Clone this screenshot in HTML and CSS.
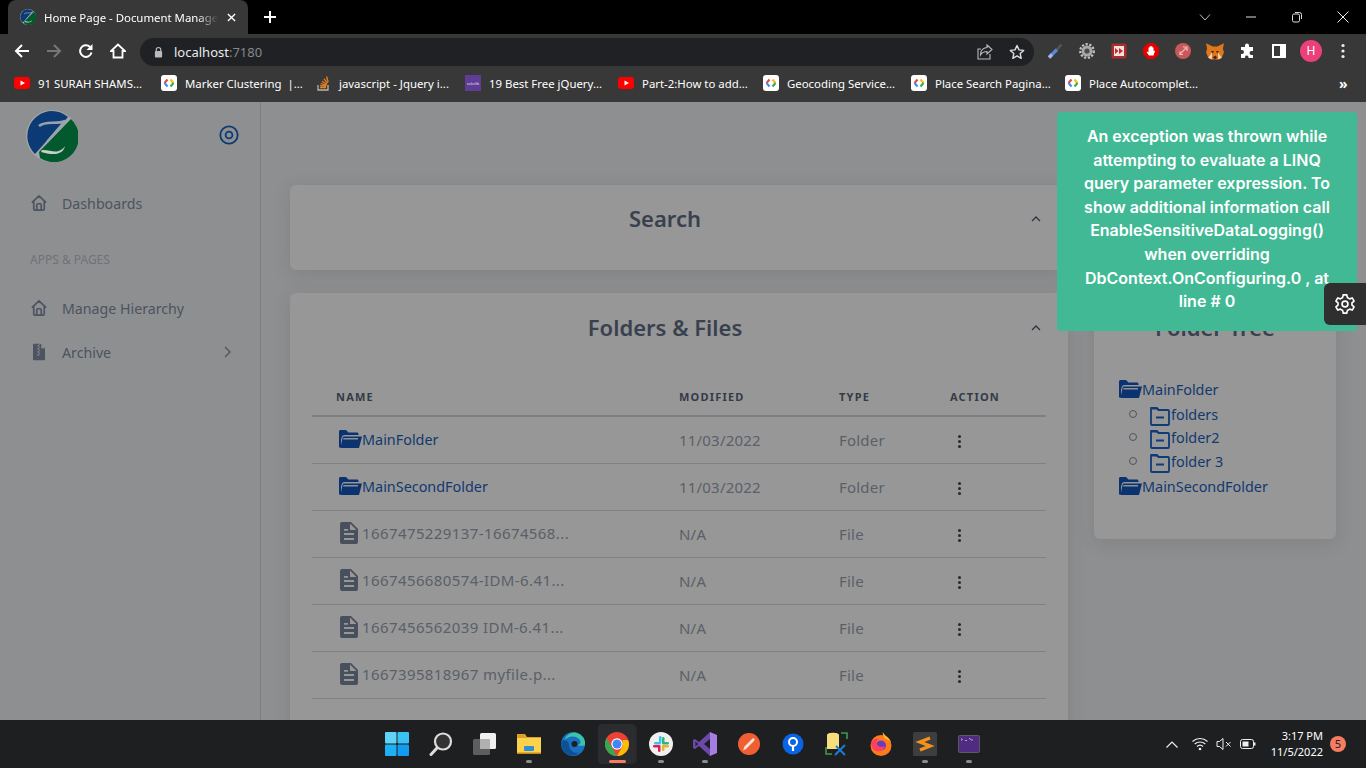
FILE: index.html
```html
<!DOCTYPE html>
<html lang="en">
<head>
    <meta charset="UTF-8">
    <meta name="viewport" content="width=device-width, initial-scale=1.0">
    <title>Home Page - Document Management</title>
    <link rel="stylesheet" href="styles.css">
</head>
<body>
    <svg class="sprites" width="0" height="0">
        <symbol id="logo" viewBox="0 0 52 52">
            <circle cx="26" cy="26" r="26" fill="#a3a5a6"/>
            <path d="M26 1A25 25 0 0 0 9 44L42 7A25 25 0 0 0 26 1Z" fill="#0b3a75"/>
            <path d="M45 9A25 25 0 0 1 14 48L13 42L45 9Z" fill="#03592e"/>
            <path d="M13 16C20 10 30 15 39 11L21 32" fill="none" stroke="#97a3ad" stroke-width="2.5"/>
            <path d="M16 40C24 39 32 46 39 36C37 46 25 45 15 42Z" fill="#c4cfc8"/>
        </symbol>
        <symbol id="home" viewBox="0 0 24 24">
            <path d="M2.500 11.500 12 2.500l9.500 9M5 9.500V20a1.500 1.500 0 0 0 1.500 1.500h11A1.500 1.500 0 0 0 19 20V9.500M9 21v-6.500a1.500 1.500 0 0 1 1.500-1.500h3a1.500 1.500 0 0 1 1.500 1.500V21" fill="none" stroke="currentColor" stroke-width="2.200" stroke-linejoin="round"/>
        </symbol>
        <symbol id="zipfile" viewBox="0 0 24 24">
            <path fill="currentColor" d="M5 1h9l6 6v15a1 1 0 0 1-1 1H5a1 1 0 0 1-1-1V2a1 1 0 0 1 1-1z"/>
            <path fill="#8f9092" d="M10 3h2v2h-2zm0 4h2v2h-2zm0 4h2v2h-2zm0 4h2v2h-2zm5-13v5h5zM12 1h1v2h-1zM12 5h1v2h-1zM12 9h1v2h-1zM12 13h1v2h-1z"/>
        </symbol>
        <symbol id="folder-open" viewBox="0 0 24 20">
            <path fill="currentColor" d="M1 2.500C1 1.700 1.700 1 2.500 1h5.500l2.500 2.500h8.500c.8 0 1.500.7 1.500 1.500v1H6.500C5 6 4.200 6.800 3.800 8L3 10.500V18.500H1z"/>
            <path fill="currentColor" d="M6.200 7.500H24l-3 11.500H2.500l2-10c.2-.9.800-1.500 1.700-1.500z"/>
            <path fill="#8f9092" d="M5.500 9h14.500v1.500H5.200z"/>
        </symbol>
        <symbol id="folder-minus" viewBox="0 0 20 20">
            <path fill="none" stroke="currentColor" stroke-width="1.800" stroke-linejoin="round" d="M1 2h5.500l2 2H18a1 1 0 0 1 1 1v13a1 1 0 0 1-1 1H2a1 1 0 0 1-1-1z"/>
            <path fill="currentColor" d="M1 1h6l2.500 2.500H1zM6 10.500h8v2H6z"/>
        </symbol>
        <symbol id="doc" viewBox="0 0 18 22">
            <path fill="currentColor" d="M2 0h9l7 7v13a2 2 0 0 1-2 2H2a2 2 0 0 1-2-2V2a2 2 0 0 1 2-2z"/>
            <path fill="#979798" d="M10 1.500V8h6.500zM4 11h10v2H4zM4 16h10v2H4zM4 7h4v1.800H4z"/>
        </symbol>
        <symbol id="gbadge" viewBox="0 0 16 16">
            <rect width="16" height="16" rx="3" fill="#fff"/>
            <path d="M6.500 4.500 3.500 8" fill="none" stroke="#ea4335" stroke-width="2"/>
            <path d="M3.500 8l3 3.500" fill="none" stroke="#4285f4" stroke-width="2"/>
            <path d="M9.500 4.500l3 3.500" fill="none" stroke="#fbbc04" stroke-width="2"/>
            <path d="M12.500 8l-3 3.500" fill="none" stroke="#34a853" stroke-width="2"/>
        </symbol>
        <symbol id="yt" viewBox="0 0 16 12">
            <rect width="16" height="12" rx="3" fill="#f00"/>
            <path d="M6.500 3.500v5L11 6z" fill="#fff"/>
        </symbol>
    </svg>

    <div class="browser">
        <div class="tabbar">
            <div class="tab">
                <svg class="favicon"><use href="#logo"/></svg>
                <span class="tab-title">Home Page - Document Management</span>
                <svg class="tab-close" viewBox="0 0 10 10"><path d="M1 1l8 8M9 1 1 9" stroke="#fff" stroke-width="1.500"/></svg>
            </div>
            <svg class="new-tab" viewBox="0 0 12 12"><path d="M6 0v12M0 6h12" stroke="#fff" stroke-width="2"/></svg>
            <div class="win-controls">
                <svg class="win-btn" viewBox="0 0 12 12"><path d="M1 3.500 6 9l5-5.500" fill="none" stroke="#bbb"/></svg>
                <svg class="win-btn" viewBox="0 0 12 12"><path d="M1 6h10" stroke="#ddd"/></svg>
                <svg class="win-btn" viewBox="0 0 12 12"><rect x="1.500" y="3" width="7" height="8" rx="1.500" fill="none" stroke="#ddd"/><path d="M4 1.500h4.500a2 2 0 0 1 2 2V8" fill="none" stroke="#ddd"/></svg>
                <svg class="win-btn" viewBox="0 0 12 12"><path d="M.5.500l11 11M11.500.500l-11 11" stroke="#eee"/></svg>
            </div>
        </div>

        <div class="toolbar">
            <svg class="nav-icon" viewBox="0 0 16 16"><path d="M15 8H2M8 2 2 8l6 6" fill="none" stroke="#fff" stroke-width="2"/></svg>
            <svg class="nav-icon" viewBox="0 0 16 16"><path d="M1 8h13M8 2l6 6-6 6" fill="none" stroke="#777" stroke-width="2"/></svg>
            <svg class="nav-icon" viewBox="0 0 16 16"><path d="M13.500 9.500A5.800 5.800 0 1 1 12 4" fill="none" stroke="#fff" stroke-width="2"/><path d="M14.500 1v6h-6z" fill="#fff"/></svg>
            <svg class="nav-icon" viewBox="0 0 16 16"><path d="M8 1.500 1 8h2.500v6.500h9V8H15z" fill="none" stroke="#fff" stroke-width="1.800"/></svg>
            <div class="omnibox">
                <svg class="lock" viewBox="0 0 10 12"><path d="M2.500 5V3.500a2.500 2.500 0 0 1 5 0V5" fill="none" stroke="#bbb" stroke-width="1.300"/><rect x="1" y="5" width="8" height="7" rx="1" fill="#bbb"/></svg>
                <span class="url">localhost<span class="url-port">:7180</span></span>
                <svg class="omni-icon" viewBox="0 0 16 16"><path d="M10 1l5 4.500L10 10V7.500C7 7.500 5 8.500 3.500 11 3.500 7 6 4 10 3.500zM13 10v5H1V5h3" fill="none" stroke="#bbb" stroke-width="1.100"/></svg>
                <svg class="omni-icon" viewBox="0 0 16 16"><path d="m8 1.500 2 4.400 4.700.5-3.500 3.200 1 4.700L8 11.900l-4.200 2.400 1-4.700L1.300 6.400 6 5.900z" fill="none" stroke="#ddd" stroke-width="1.400" stroke-linejoin="round"/></svg>
            </div>
            <div class="extensions">
                <svg class="ext" viewBox="0 0 16 16"><path d="M2 14.500 10 6.500" stroke="#5d86d6" stroke-width="3.200"/><path d="M2 14.500 5 11.500" stroke="#9db8ea" stroke-width="3.200"/><path d="M10 6.500 14.500 1.500" stroke="#555" stroke-width="2.600"/></svg>
                <svg class="ext" viewBox="0 0 16 16"><circle cx="8" cy="8" r="5.500" fill="#a9a9a9"/><circle cx="8" cy="8" r="6.800" fill="none" stroke="#c4c4c4" stroke-width="2.200" stroke-dasharray="2.200 1.600"/><circle cx="8" cy="8" r="2.600" fill="#4a4a4a"/></svg>
                <svg class="ext" viewBox="0 0 16 16"><rect x=".5" y=".5" width="15" height="15" rx="2" fill="#a92f2f"/><rect x="3" y="3" width="10" height="10" fill="#f1e2e2"/><path d="M4 5v6l3.500-3zM8 5v6l4-3z" fill="#c62828"/></svg>
                <svg class="ext" viewBox="0 0 16 16"><path d="M5 0h6l5 5v6l-5 5H5l-5-5V5z" fill="#e60000"/><path d="M6 12.500 3.500 9l.6-.6L5.500 9.500V4.500h1v-1h1V3h1v.5h1v1h1v3.500l1-.5.500.5-1.500 4.500z" fill="#fff"/></svg>
                <svg class="ext" viewBox="0 0 16 16"><circle cx="8" cy="8" r="8" fill="#c9585a"/><path d="M4.500 11.500 11 5M8 4h4v4M5 8.500v3h3" fill="none" stroke="#eebcbc" stroke-width="1.200"/></svg>
                <svg class="ext ext-fox" viewBox="0 0 16 16"><path d="M0 1l6 3h4l6-3-1 5 1 3-2 5-3 1.500H5L2 14 0 9l1-3z" fill="#e2761b"/><path d="M4.500 8h2.500l-1 2.500zm7 0H9l1 2.500zM6 13.500l2-1.500 2 1.500-2 2z" fill="#3a2a20"/><path d="M2 14 5.500 9 5 15.500zM14 14l-3.500-5 .5 6.500z" fill="#f6d6b0"/></svg>
                <svg class="ext" viewBox="0 0 16 16"><path fill="#fff" d="M6 2.500a2 2 0 0 1 4 0V4h4v4h-1.500a2 2 0 0 0 0 4H14v3H9.500v-1a1.800 1.800 0 0 0-3.500 0v1H2v-4h1a2 2 0 0 0 0-4H2V4h4z"/></svg>
                <svg class="ext" viewBox="0 0 16 16"><rect x="2" y="2" width="12" height="12" fill="none" stroke="#fff" stroke-width="2"/><rect x="9" y="2" width="5" height="12" fill="#fff"/></svg>
                <span class="avatar">H</span>
                <svg class="ext" viewBox="0 0 16 16"><circle cx="8" cy="2.500" r="1.600" fill="#eee"/><circle cx="8" cy="8" r="1.600" fill="#eee"/><circle cx="8" cy="13.500" r="1.600" fill="#eee"/></svg>
            </div>
        </div>

        <div class="bookmarks">
            <span class="bm"><svg class="bm-icon"><use href="#yt"/></svg>91 SURAH SHAMS...</span>
            <span class="bm"><svg class="bm-icon"><use href="#gbadge"/></svg>Marker Clustering &nbsp;|...</span>
            <span class="bm"><svg class="bm-icon" viewBox="0 0 16 16"><path d="M3 10v5h10v-5" fill="none" stroke="#b9b4ac" stroke-width="1.300"/><path d="M5 12.500h6M5.200 10.500l6 .6M5.800 8.500l5.800 1.700M7 6.300l5 3M9 3.800l3.500 4.400M11.500 1.500l1.700 5.500" stroke="#e98024" stroke-width="1.300"/></svg>javascript - Jquery i...</span>
            <span class="bm"><svg class="bm-icon" viewBox="0 0 16 16"><rect width="16" height="16" fill="#5f3d97"/><text x="8" y="9.500" class="colorlib">colorlib</text></svg>19 Best Free jQuery...</span>
            <span class="bm"><svg class="bm-icon"><use href="#yt"/></svg>Part-2:How to add...</span>
            <span class="bm"><svg class="bm-icon"><use href="#gbadge"/></svg>Geocoding Service...</span>
            <span class="bm"><svg class="bm-icon"><use href="#gbadge"/></svg>Place Search Pagina...</span>
            <span class="bm"><svg class="bm-icon"><use href="#gbadge"/></svg>Place Autocomplet...</span>
            <span class="bm-more">»</span>
        </div>
    </div>

    <div class="page">
        <aside class="sidebar">
            <div class="brand">
                <svg class="brand-logo"><use href="#logo"/></svg>
                <svg class="brand-toggle" viewBox="0 0 20 20"><circle cx="10" cy="10" r="8.700" fill="none" stroke="#0b3a75" stroke-width="1.800"/><circle cx="10" cy="10" r="3.400" fill="none" stroke="#0b3a75" stroke-width="1.800"/></svg>
            </div>
            <a class="nav-item nav-first"><svg class="nav-svg"><use href="#home"/></svg>Dashboards</a>
            <div class="nav-header">APPS &amp; PAGES</div>
            <a class="nav-item"><svg class="nav-svg"><use href="#home"/></svg>Manage Hierarchy</a>
            <a class="nav-item"><svg class="nav-svg"><use href="#zipfile"/></svg>Archive<svg class="nav-arrow" viewBox="0 0 8 12"><path d="M1 1l5 5-5 5" fill="none" stroke="currentColor" stroke-width="1.300"/></svg></a>
        </aside>

        <main class="content">
            <section class="card card-search">
                <h2>Search</h2>
                <svg class="collapse" viewBox="0 0 10 6"><path d="M1 5l4-4 4 4" fill="none" stroke="currentColor" stroke-width="1.300"/></svg>
            </section>

            <section class="card card-files">
                <h2>Folders &amp; Files</h2>
                <svg class="collapse" viewBox="0 0 10 6"><path d="M1 5l4-4 4 4" fill="none" stroke="currentColor" stroke-width="1.300"/></svg>
                <table class="files">
                    <thead>
                        <tr><th>Name</th><th>Modified</th><th>Type</th><th>Action</th></tr>
                    </thead>
                    <tbody>
                        <tr>
                            <td class="name folder"><svg class="ico-folder"><use href="#folder-open"/></svg>MainFolder</td>
                            <td>11/03/2022</td><td>Folder</td><td><span class="dots"></span></td>
                        </tr>
                        <tr>
                            <td class="name folder"><svg class="ico-folder"><use href="#folder-open"/></svg>MainSecondFolder</td>
                            <td>11/03/2022</td><td>Folder</td><td><span class="dots"></span></td>
                        </tr>
                        <tr>
                            <td class="name file"><svg class="ico-doc"><use href="#doc"/></svg>1667475229137-16674568...</td>
                            <td>N/A</td><td>File</td><td><span class="dots"></span></td>
                        </tr>
                        <tr>
                            <td class="name file"><svg class="ico-doc"><use href="#doc"/></svg>1667456680574-IDM-6.41...</td>
                            <td>N/A</td><td>File</td><td><span class="dots"></span></td>
                        </tr>
                        <tr>
                            <td class="name file"><svg class="ico-doc"><use href="#doc"/></svg>1667456562039 IDM-6.41...</td>
                            <td>N/A</td><td>File</td><td><span class="dots"></span></td>
                        </tr>
                        <tr>
                            <td class="name file"><svg class="ico-doc"><use href="#doc"/></svg>1667395818967 myfile.p...</td>
                            <td>N/A</td><td>File</td><td><span class="dots"></span></td>
                        </tr>
                    </tbody>
                </table>
            </section>

            <section class="card card-tree">
                <h2>Folder Tree</h2>
                <ul class="tree">
                    <li class="tree-root"><svg class="ico-folder"><use href="#folder-open"/></svg>MainFolder
                        <ul class="tree-sub">
                            <li><svg class="ico-minus"><use href="#folder-minus"/></svg>folders</li>
                            <li><svg class="ico-minus"><use href="#folder-minus"/></svg>folder2</li>
                            <li><svg class="ico-minus"><use href="#folder-minus"/></svg>folder 3</li>
                        </ul>
                    </li>
                    <li class="tree-root"><svg class="ico-folder"><use href="#folder-open"/></svg>MainSecondFolder</li>
                </ul>
            </section>
        </main>

        <div class="toast">An exception was thrown while attempting to evaluate a LINQ query parameter expression. To show additional information call EnableSensitiveDataLogging() when overriding DbContext.OnConfiguring.0 , at line # 0</div>
        <button class="customizer"><svg viewBox="0 0 24 24"><path d="M10 2h4l.6 3 2.400 1.400 2.900-1 2 3.400-2.300 2v2.400l2.300 2-2 3.400-2.900-1L14.600 19 14 22h-4l-.6-3L7 17.600l-2.900 1-2-3.400 2.300-2v-2.400l-2.300-2 2-3.400 2.900 1L9.400 5z" fill="none" stroke="#fff" stroke-width="1.800" stroke-linejoin="round"/><circle cx="12" cy="12" r="3.200" fill="none" stroke="#fff" stroke-width="1.800"/></svg></button>
    </div>

    <footer class="taskbar">
        <div class="task-icons">
            <span class="task"><svg viewBox="0 0 24 24"><rect x="0" y="0" width="11.500" height="11.500" rx="1" fill="#5fd4f7"/><rect x="12.500" y="0" width="11.500" height="11.500" rx="1" fill="#3ac2f5"/><rect x="0" y="12.500" width="11.500" height="11.500" rx="1" fill="#1eb0f5"/><rect x="12.500" y="12.500" width="11.500" height="11.500" rx="1" fill="#129bf0"/></svg></span>
            <span class="task"><svg viewBox="0 0 24 24"><circle cx="14" cy="9.500" r="8" fill="#333" stroke="#ddd" stroke-width="2.200"/><path d="M8 16 2 22.500" stroke="#ddd" stroke-width="3" stroke-linecap="round"/></svg></span>
            <span class="task"><svg viewBox="0 0 24 24"><rect x="7" y="1" width="16" height="16" rx="1.500" fill="#f0f0f0"/><rect x="0" y="7" width="17" height="16" rx="1.500" fill="#5e5e5e"/><rect x="7" y="7" width="10" height="10" fill="#b0b0b0"/></svg></span>
            <span class="task running"><svg viewBox="0 0 24 24"><path d="M0 2h8l2 3H24v17H0z" fill="#d9a227"/><rect y="6" width="24" height="16" fill="#fcd24d"/><rect x="7" y="14" width="10" height="5" rx="1" fill="#2d8fd5"/><rect y="20.500" width="24" height="1.500" fill="#c68a12"/></svg></span>
            <span class="task"><svg viewBox="0 0 24 24"><circle cx="12" cy="12" r="12" fill="#1a6fc0"/><path d="M23.800 13.500A10 10 0 0 0 3 9C6 4 14 3 18 7c3 3 1 6-2 6 3 1 6 1 7.800.5z" fill="#37c6a8"/><path d="M8 13c0 5 5 9 10 7.500-2 2-5 3.500-8 3A12 12 0 0 1 .500 9.500C3 7 8 8 8 13z" fill="#0f4f95"/><circle cx="13.500" cy="12" r="3" fill="#1e1f21"/></svg></span>
            <span class="task task-active"><svg viewBox="0 0 24 24"><circle cx="12" cy="12" r="12" fill="#ea4335"/><path d="M12 24A12 12 0 0 1 1.600 6L7 15.500l5 8.500z" fill="#34a853"/><path d="M24 12a12 12 0 0 1-12 12l6-10.500-.500-5.500h5.500c.6 1.200 1 2.500 1 4z" fill="#fbbc04"/><circle cx="12" cy="12" r="5.700" fill="#fff"/><circle cx="12" cy="12" r="4.500" fill="#4285f4"/></svg></span>
            <span class="task running"><svg viewBox="0 0 24 24"><circle cx="12" cy="12" r="12" fill="#f1f0ee"/><rect x="10" y="4" width="2.500" height="7" rx="1.200" fill="#36c5f0"/><rect x="5" y="10" width="7" height="2.500" rx="1.200" fill="#36c5f0"/><rect x="13" y="5" width="2.500" height="7" rx="1.200" fill="#2eb67d"/><rect x="13" y="10" width="7" height="2.500" rx="1.200" fill="#2eb67d"/><rect x="4" y="13" width="7" height="2.500" rx="1.200" fill="#e01e5a"/><rect x="9" y="13" width="2.500" height="7" rx="1.200" fill="#e01e5a"/><rect x="13" y="13" width="2.500" height="6" rx="1.200" fill="#ecb22e"/><rect x="13" y="13" width="7" height="2.500" rx="1.200" fill="#ecb22e"/></svg></span>
            <span class="task running"><svg viewBox="0 0 24 24"><path d="M17 0 24 3v18l-7 3z" fill="#a67ee2"/><path d="M17 0 6 10 2 7 0 8v8l2 1 4-3 11 10V17l-6-5 6-5z" fill="#6c49a8"/><path d="M2.500 9.500 5 12l-2.500 2.500z" fill="#1e1f21"/></svg></span>
            <span class="task"><svg viewBox="0 0 24 24"><circle cx="12" cy="12" r="11" fill="#f05f33"/><path d="M6 18.500l1.500-4L15 7c1-1 2.500-1 2.500 0s0 1.500-1 2.500L9 17z" fill="#fbe3da"/></svg></span>
            <span class="task"><svg viewBox="0 0 24 24"><circle cx="12" cy="12" r="10.500" fill="#0b63e5"/><circle cx="12" cy="10" r="4" fill="none" stroke="#fff" stroke-width="2"/><path d="M12 13v6" stroke="#fff" stroke-width="2.200"/></svg></span>
            <span class="task"><svg viewBox="0 0 24 24"><path d="M2 3c0-3 12-3 12 0v14H2z" fill="#f6df7c"/><path d="M16 1h6v6M1 15v7h6" fill="none" stroke="#3c9c4a" stroke-width="1.600"/><path d="M10 23l10-10M11 14l9 9" stroke="#1e7bd6" stroke-width="2"/></svg></span>
            <span class="task"><svg viewBox="0 0 24 24"><circle cx="12" cy="13.500" r="10.500" fill="#ff7a1a"/><path d="M14 0c1 4 7 5 8 11-2-3-4-4-6-4-1-3-3-4-2-7z" fill="#ffb52e"/><circle cx="12" cy="13.500" r="5" fill="#6b3bbf"/><path d="M2 11c2-4 5-5 8-4-2 1-3 3-2 5 1 3 5 4 8 2-1 4-5 6-9 5-3-1-5-4-5-8z" fill="#ff3f5e"/></svg></span>
            <span class="task running"><svg viewBox="0 0 24 24"><rect width="24" height="24" rx="1.500" fill="#3e3e3e"/><path d="M17 6 7 10l10 4-10 4" fill="none" stroke="#f5921e" stroke-width="3.400"/></svg></span>
            <span class="task running"><svg viewBox="0 0 24 24"><rect x="1.500" y="3.500" width="21" height="17" rx="1" fill="#4f2c80" stroke="#5a5a5f"/><path d="M4 6.500l1.500 1-1.500 1M8 8.500h2M12 6.500h1l1 1.500h2" fill="none" stroke="#cdbbe0" stroke-width=".8"/></svg></span>
        </div>
        <div class="tray">
            <svg class="tray-chev" viewBox="0 0 12 7"><path d="M.5 6.500 6 1l5.500 5.500" fill="none" stroke="#eee" stroke-width="1.200"/></svg>
            <svg class="tray-ico" viewBox="0 0 16 14"><path d="M.5 4.500a11 11 0 0 1 15 0M2.700 7a8 8 0 0 1 10.600 0M5 9.500a4.500 4.500 0 0 1 6 0" fill="none" stroke="#eee" stroke-width="1.100"/><circle cx="8" cy="12" r="1.300" fill="#eee"/></svg>
            <svg class="tray-ico" viewBox="0 0 16 14"><path d="M1 4.500h2.500L7 1.500v11L3.500 9.500H1z" fill="none" stroke="#eee"/><path d="M10 5l4.500 4.500M14.500 5 10 9.500" stroke="#eee"/></svg>
            <svg class="tray-ico" viewBox="0 0 16 14"><rect x=".5" y="2.500" width="13" height="9" rx="2" fill="none" stroke="#eee"/><rect x="2.500" y="4.500" width="6" height="5" fill="#eee"/><rect x="14" y="5.500" width="1.500" height="3" fill="#eee"/></svg>
            <div class="clock"><span>3:17 PM</span><span>11/5/2022</span></div>
            <span class="notify">5</span>
        </div>
    </footer>
</body>
</html>
```

FILE: styles.css
```css
* {
    box-sizing: border-box;
}
html, body {
    margin: 0;
    width: 1366px;
    height: 768px;
    overflow: hidden;
}
body {
    display: flex;
    flex-direction: column;
    font-family: "Noto Sans", sans-serif;
    background: #8e8f90;
}
.sprites {
    position: absolute;
}

/* browser chrome */
.browser {
    flex: none;
    height: 102px;
    background: #383838;
    color: #fff;
}
.tabbar {
    height: 34px;
    background: #000;
    display: flex;
    align-items: center;
}
.tab {
    width: 240px;
    height: 34px;
    margin-left: 8px;
    padding: 0 11px 0 12px;
    background: #383838;
    border-radius: 8px 8px 0 0;
    display: flex;
    align-items: center;
}
.favicon {
    width: 16px;
    height: 16px;
    flex: none;
}
.tab-title {
    margin-left: 8px;
    width: 174px;
    flex: none;
    font-size: 11.400px;
    white-space: nowrap;
    overflow: hidden;
    -webkit-mask-image: linear-gradient(to right, #000 88%, transparent);
    mask-image: linear-gradient(to right, #000 88%, transparent);
}
.tab-close {
    width: 9px;
    height: 9px;
    margin-left: 9px;
    flex: none;
}
.new-tab {
    width: 12px;
    height: 12px;
    margin-left: 16px;
}
.win-controls {
    margin-left: auto;
    padding-right: 17px;
    display: flex;
    gap: 34px;
}
.win-btn {
    width: 12px;
    height: 12px;
}
.toolbar {
    height: 34px;
    padding-left: 14px;
    display: flex;
    align-items: center;
    gap: 16px;
}
.nav-icon {
    width: 16px;
    height: 16px;
    flex: none;
}
.omnibox {
    width: 894px;
    height: 28px;
    margin-top: 2px;
    margin-left: -2px;
    padding: 0 9px 0 14px;
    border-radius: 14px;
    background: #202124;
    display: flex;
    align-items: center;
}
.lock {
    width: 9px;
    height: 12px;
}
.url {
    margin-left: 11px;
    margin-right: auto;
    font-size: 13px;
    color: #e8eaed;
}
.url-port {
    color: #85888c;
}
.omni-icon {
    width: 16px;
    height: 16px;
    margin-left: 16px;
}
.extensions {
    display: flex;
    align-items: center;
    margin-left: -3px;
    gap: 16px;
}
.ext {
    width: 16px;
    height: 16px;
    flex: none;
}
.ext-fox {
    width: 18px;
    height: 18px;
    margin: 0 -1px;
}
.avatar {
    width: 22px;
    height: 22px;
    margin: 0 -3px;
    border-radius: 50%;
    background: #ec407a;
    font-size: 12px;
    line-height: 22px;
    text-align: center;
}
.bookmarks {
    height: 34px;
    padding: 0 0 4px 14px;
    display: grid;
    grid-template-columns: 147px 154px 150px 153px 145px 148px 154px 274px auto;
    align-items: center;
    font-size: 11.400px;
}
.bm {
    display: flex;
    align-items: center;
    white-space: nowrap;
}
.bm-icon {
    width: 16px;
    height: 16px;
    margin-right: 8px;
    flex: none;
}
.colorlib {
    font-size: 3.500px;
    fill: #e8e0f0;
    text-anchor: middle;
}
.bm-more {
    font-size: 14px;
    font-weight: 700;
}

/* page behind the dimmed backdrop */
.page {
    position: relative;
    flex: 1;
    min-height: 0;
    display: flex;
    overflow: hidden;
    color: #5a5f68;
}
.sidebar {
    width: 261px;
    flex: none;
    padding-left: 30px;
    border-right: 1px solid #7c7e81;
}
.brand {
    height: 66px;
    padding: 7px 21px 0 0;
    display: flex;
    align-items: center;
    justify-content: space-between;
}
.brand-logo {
    width: 52px;
    height: 52px;
    margin-left: -4px;
    margin-top: -6px;
}
.brand-toggle {
    width: 20px;
    height: 20px;
    margin-top: -8px;
}
.nav-item {
    height: 44px;
    display: flex;
    align-items: center;
    gap: 14px;
    font-size: 14.200px;
    color: #4c5361;
}
.nav-first {
    margin-top: 13px;
}
.nav-svg {
    width: 18px;
    height: 18px;
    flex: none;
}
.nav-arrow {
    width: 8px;
    height: 12px;
    margin-left: auto;
    margin-right: 28px;
}
.nav-header {
    margin: 18px 0 9px;
    height: 34px;
    line-height: 34px;
    font-size: 12px;
    color: #6f7278;
}
.content {
    flex: 1;
    padding: 83px 0 0 29px;
    display: grid;
    grid-template-columns: 778px 242px;
    grid-template-rows: 85px auto;
    column-gap: 26px;
    row-gap: 23px;
    align-items: start;
}
.card {
    position: relative;
    background: #979797;
    border-radius: 6px;
    box-shadow: 0 4px 18px rgba(50, 50, 60, 0.13);
}
.card h2 {
    margin: 0;
    font-size: 22px;
    font-weight: 600;
    line-height: 30px;
    text-align: center;
    color: #39414f;
}
.card-search {
    grid-column: 1;
    height: 85px;
    padding-top: 18px;
}
.card-search h2, .card-files h2 {
    padding-right: 28px;
}
.card-files {
    grid-column: 1;
    height: 460px;
    padding: 19px 22px 0;
}
.card-tree {
    grid-column: 2;
    height: 246px;
    padding-top: 19px;
}
.collapse {
    position: absolute;
    top: 31px;
    right: 27px;
    width: 10px;
    height: 6px;
    color: #2e3542;
}
.card-files .collapse {
    top: 32px;
}
.files {
    width: 734px;
    margin-top: 36px;
    border-collapse: collapse;
    table-layout: fixed;
    font-size: 15px;
}
.files th {
    height: 38px;
    padding: 0 0 0 24px;
    font-size: 11px;
    font-weight: 700;
    letter-spacing: 1.200px;
    text-align: left;
    text-transform: uppercase;
    color: #343b48;
    border-bottom: 2px solid #7b8085;
}
.files th:nth-child(1) {
    width: 343px;
}
.files th:nth-child(2) {
    width: 160px;
}
.files th:nth-child(3) {
    width: 111px;
}
.files td {
    height: 47px;
    padding: 0 0 0 24px;
    border-bottom: 1px solid #7f8184;
    white-space: nowrap;
    letter-spacing: 0.200px;
}
.files td.name {
    padding-left: 26px;
    padding-bottom: 2px;
}
.files td.folder {
    font-size: 14.400px;
    letter-spacing: 0;
    color: #12396f;
}
.files td.file {
    letter-spacing: 0.400px;
}
.ico-folder {
    width: 24px;
    height: 20px;
    vertical-align: -4px;
    color: #0a3370;
}
.ico-doc {
    width: 18px;
    height: 22px;
    margin: 0 4px 0 2px;
    vertical-align: -5px;
    color: #49505d;
}
.ico-minus {
    width: 20px;
    height: 20px;
    margin-right: 1px;
    vertical-align: -6px;
    color: #0f3b78;
}
.dots {
    display: block;
    width: 3px;
    height: 3px;
    margin: 4px 0 0 8px;
    border-radius: 50%;
    background: #252a33;
    box-shadow: 0 -5px 0 #252a33, 0 5px 0 #252a33;
}
.tree {
    margin: 36px 0 0;
    padding: 0 0 0 24px;
    list-style: none;
    font-size: 14.400px;
    line-height: 23.500px;
    color: #12396f;
}
.tree-root {
    margin-bottom: 1px;
}
.tree-sub {
    margin: 1px 0 2px;
    padding: 0 0 0 32px;
    list-style: none;
}
.tree-sub li {
    position: relative;
}
.tree-sub li::before {
    content: "";
    position: absolute;
    left: -21px;
    top: 7px;
    width: 6px;
    height: 6px;
    border: 1px solid #4f5560;
    border-radius: 50%;
}

/* toast on top of the backdrop */
.toast {
    position: absolute;
    top: 10px;
    right: 9px;
    width: 300px;
    height: 219px;
    padding: 13px 20px 0;
    border-radius: 4px;
    background: #41b994;
    color: #fff;
    font-family: Inter, sans-serif;
    font-size: 16px;
    font-weight: 600;
    line-height: 23.600px;
    text-align: center;
}
.customizer {
    position: absolute;
    top: 181px;
    right: 0;
    width: 42px;
    height: 42px;
    padding: 10px;
    border: 0;
    border-radius: 6px 0 0 6px;
    background: #2f2f2f;
}
.customizer svg {
    display: block;
    width: 22px;
    height: 22px;
}

/* windows taskbar */
.taskbar {
    position: relative;
    flex: none;
    height: 48px;
    background: #1e1f21;
    display: flex;
    align-items: center;
    justify-content: center;
    color: #fff;
}
.task-icons {
    display: flex;
}
.task {
    position: relative;
    width: 44px;
    height: 44px;
    display: flex;
    align-items: center;
    justify-content: center;
}
.task svg {
    position: relative;
    width: 24px;
    height: 24px;
}
.running::after, .task-active::after {
    content: "";
    position: absolute;
    bottom: 3px;
    left: 19px;
    width: 6px;
    height: 3px;
    border-radius: 2px;
    background: #8a8c8f;
}
.task-active::before {
    content: "";
    position: absolute;
    top: 2px;
    left: 3px;
    width: 37px;
    height: 40px;
    border-radius: 4px;
    background: #2b2c2f;
    box-shadow: 3px 0 0 -1px #29292c;
}
.task-active::after {
    left: 14px;
    width: 17px;
    background: #f47c60;
}
.tray {
    position: absolute;
    top: 0;
    bottom: 0;
    right: 20px;
    display: flex;
    align-items: center;
}
.tray-chev {
    width: 12px;
    height: 7px;
    margin-right: 14px;
}
.tray-ico {
    width: 16px;
    height: 14px;
    margin-right: 8px;
}
.clock {
    margin-left: 7px;
    display: flex;
    flex-direction: column;
    align-items: flex-end;
    font-size: 11px;
    line-height: 16px;
}
.notify {
    width: 16px;
    height: 16px;
    margin-left: 7px;
    border-radius: 50%;
    background: #f47c60;
    color: #1e1f21;
    font-size: 11px;
    line-height: 16px;
    text-align: center;
}
```
